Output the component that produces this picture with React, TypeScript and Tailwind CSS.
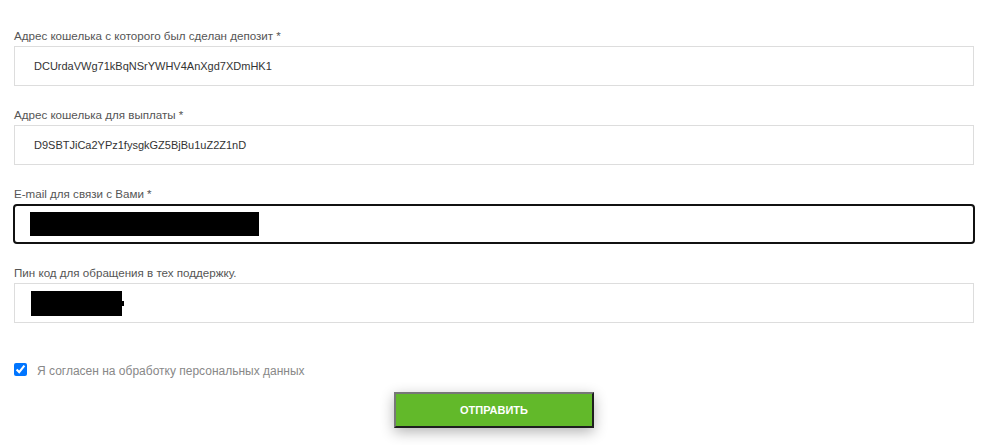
import { useState } from 'react';

const FIELDS = [
  { label: 'Адрес кошелька с которого был сделан депозит', required: true, value: 'DCUrdaVWg71kBqNSrYWHV4AnXgd7XDmHK1' },
  { label: 'Адрес кошелька для выплаты', required: true, value: 'D9SBTJiCa2YPz1fysgkGZ5BjBu1uZ2Z1nD' },
];

function Label({ text, required }: { text: string; required?: boolean }) {
  return (
    <label className="block text-[11.6px] leading-[15px] text-[#555] mb-[3px]">
      {text}
      {required && <span className="text-[#555]"> *</span>}
    </label>
  );
}

export default function App() {
  const [agreed, setAgreed] = useState(true);

  return (
    <div className="w-[994px] h-[445px] bg-white overflow-hidden font-['Liberation_Sans',Arial,sans-serif]">
      <form className="pl-[14px] pr-[20px] pt-[28px]">
        {FIELDS.map((f) => (
          <div key={f.label} className="mb-[21px]">
            <Label text={f.label} required={f.required} />
            <div className="h-[40px] border border-[#ddd] flex items-center pl-[19px] text-[11px] text-[#333]">
              {f.value}
            </div>
          </div>
        ))}

        {/* E-mail (focused, redacted) */}
        <div className="mb-[21px]">
          <Label text="E-mail для связи с Вами" required />
          <div className="h-[40px] -mx-[1px] border-2 border-[#111] rounded-[4px] flex items-center pl-[15px]">
            <div className="w-[229px] h-[24px] bg-black" />
          </div>
        </div>

        {/* PIN (redacted) */}
        <div>
          <Label text="Пин код для обращения в тех поддержку." />
          <div className="h-[40px] border border-[#ddd] flex items-center pl-[16px]">
            <div className="relative w-[91px] h-[25px] bg-black">
              <div className="absolute right-[-2px] top-[10px] w-[2px] h-[5px] bg-black" />
            </div>
          </div>
        </div>

        <label className="flex items-center mt-[40px] h-[13px] text-[12px] text-[#888]">
          <input
            type="checkbox"
            checked={agreed}
            onChange={(e) => setAgreed(e.target.checked)}
            className="w-[13px] h-[13px] m-0 accent-[#0075ff]"
          />
          <span className="ml-[10px] mt-[2px]">Я согласен на обработку персональных данных</span>
        </label>

        <div className="flex justify-center mt-[16px]">
          <button
            type="button"
            className="w-[200px] h-[36px] bg-[#62b92a] border-2 border-t-[#777] border-l-[#777] border-b-[#1e1e1e] border-r-[#1e1e1e] text-white font-bold text-[11px] uppercase shadow-[0_4px_14px_rgba(0,0,0,0.3)]"
          >
            Отправить
          </button>
        </div>
      </form>
    </div>
  );
}
